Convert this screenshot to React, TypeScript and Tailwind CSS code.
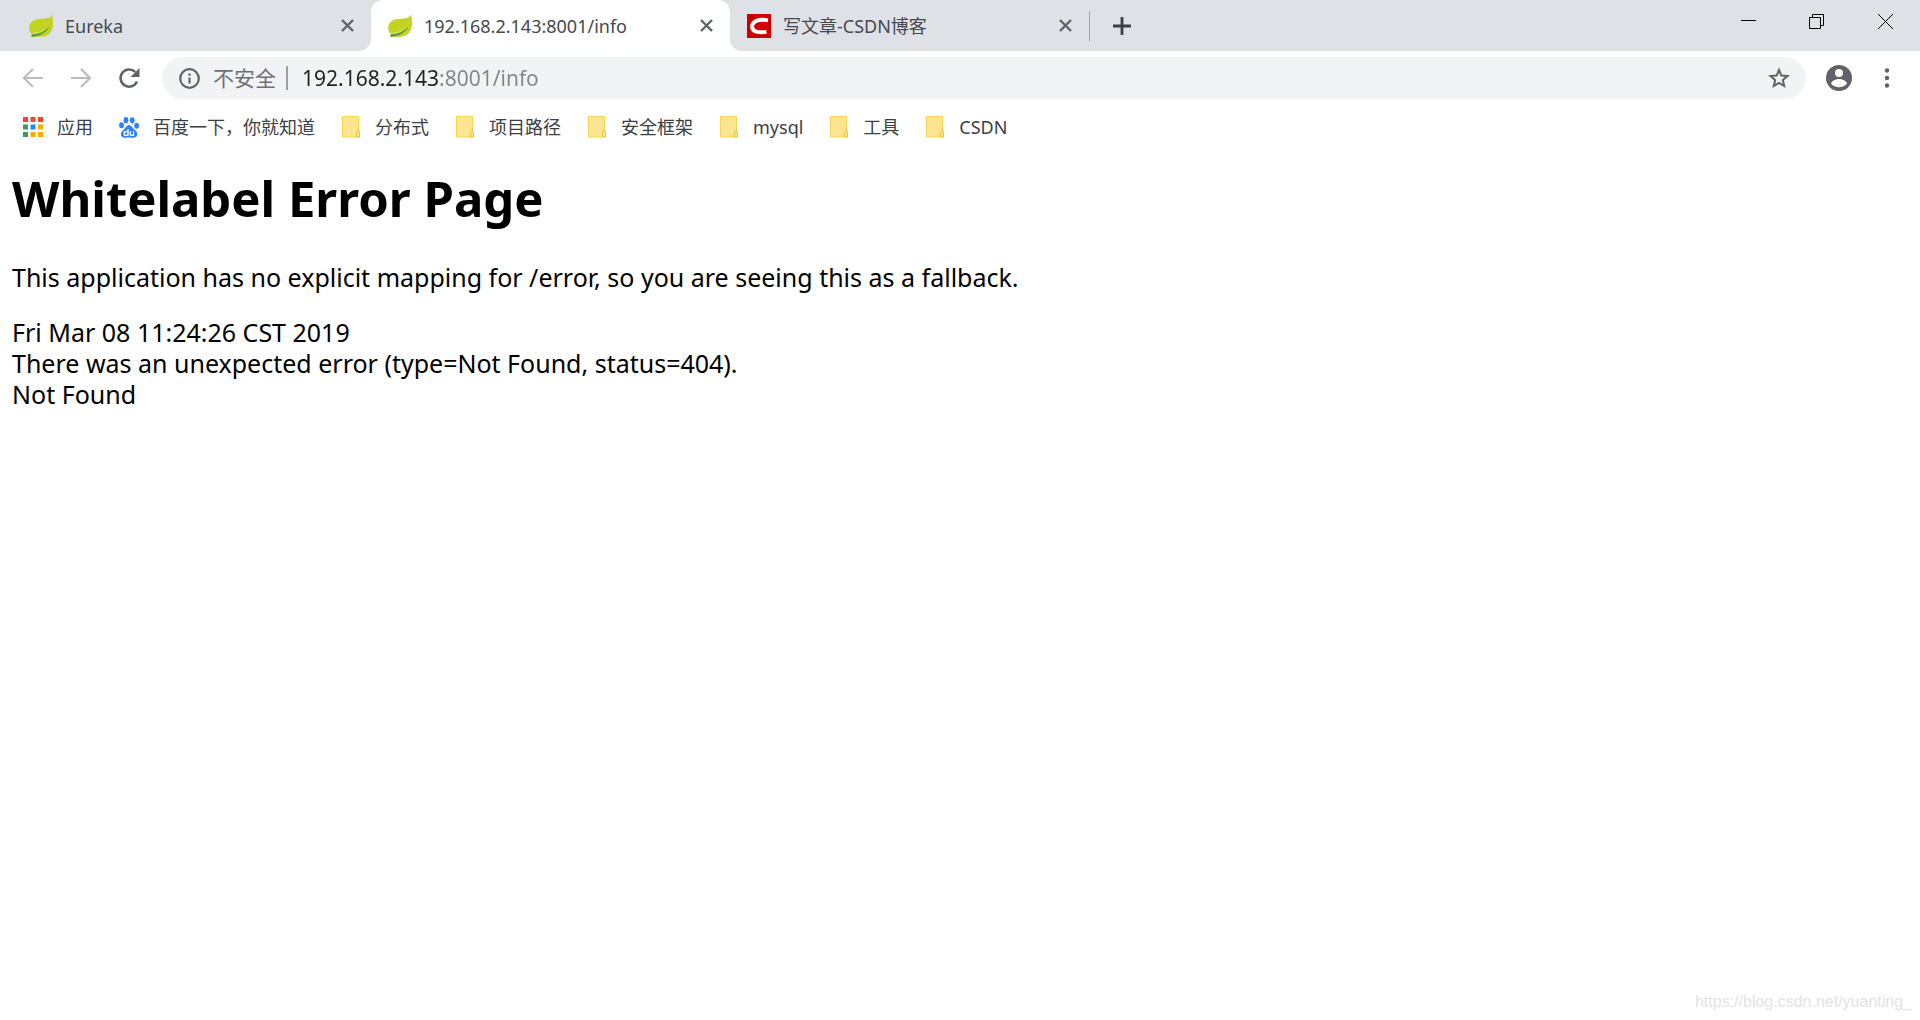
import { useState } from "react";
import type { ReactNode } from "react";

const Leaf = () => (
  <svg viewBox="0 0 24 24" className="size-6 shrink-0" aria-hidden="true">
    <path
      d="M23.200.8C21.500 4 18 4.700 12 4.800 5 5 .3 8.500.2 13.500c0 3 .8 5 2.600 6.800L2.400 23c3.600-.6 6 .2 10.600-.2 7-.6 11-6 11-12.500 0-4-.3-6.500-.8-9.500Z"
      fill="#c3d322"
    />
    <path d="M2.800 20.200c7 .3 12.700-2.200 17.700-8.700C18.500 18 12 22.200 2.400 22.900Z" fill="#5b9a3a" />
    <path d="M2.300 19.200c7.200.2 12.700-2.200 17.400-7.200" stroke="#dbe56a" strokeWidth=".8" fill="none" />
  </svg>
);

const CsdnLogo = () => (
  <svg viewBox="0 0 24 24" className="size-6 shrink-0" aria-hidden="true">
    <rect width="24" height="24" fill="#c00" />
    <path d="M21 6.300C12.500 4.700 5.400 6.500 5.100 12.500c-.1 5.500 6 6.500 14.400 5.400" stroke="#fff" strokeWidth="3.900" fill="none" />
  </svg>
);

const AppsIcon = () => {
  const colors = ["#f44336", "#f44336", "#f44336", "#34a056", "#1e8cff", "#f9ab00", "#34a056", "#f9ab00", "#f9ab00"];
  return (
    <svg viewBox="0 0 20 20" className="size-5 shrink-0" aria-hidden="true">
      {colors.map((color, i) => (
        <rect key={i} x={(i % 3) * 7.5} y={Math.floor(i / 3) * 7.5} width="5" height="5" fill={color} />
      ))}
    </svg>
  );
};

const BaiduIcon = () => (
  <svg viewBox="0 0 20 21" className="h-[21px] w-5 shrink-0" fill="#2d82fb" aria-hidden="true">
    <ellipse cx="2.500" cy="8.200" rx="2.400" ry="3" />
    <ellipse cx="7" cy="3.200" rx="2.400" ry="3.100" />
    <ellipse cx="13.200" cy="3.300" rx="2.400" ry="3.100" />
    <ellipse cx="17.600" cy="8.800" rx="2.400" ry="3" />
    <path d="M10 8c2.300 0 3.200 2.500 4.800 4 1.700 1.500 3.700 2.800 3.400 5.500-.4 3-3 3.300-5.200 3.200-2-.2-4-.2-6 0-2.500.2-4.900-.2-5.200-3.200-.2-2.500 2-4 3.500-5.500S7.700 8 10 8Z" />
    <path d="M9 12.200v6.100H7a1.900 1.900 0 0 1 0-3.800h2M11.200 14.300v2.700q0 1.300 1.300 1.300h2v-4" stroke="#fff" strokeWidth="1.300" fill="none" />
  </svg>
);

const FolderIcon = () => (
  <svg viewBox="0 0 20 22" className="h-[22px] w-5 shrink-0" aria-hidden="true">
    <path d="M1.500.500h16v14.500h1v6h-17Z" fill="#ffe591" stroke="#f8d74f" />
    <path d="M15.500 21v-4.500q0-1.500 1.500-1.500t1.500 1.500V21Z" fill="#ffe591" stroke="#ecc440" />
  </svg>
);

const CloseIcon = () => (
  <svg viewBox="0 0 13 13" className="size-[13px]" aria-hidden="true">
    <path d="M1 1l11 11M12 1L1 12" stroke="#5f6368" strokeWidth="2.400" />
  </svg>
);

const tabs = [
  { title: "Eureka", icon: <Leaf /> },
  { title: "192.168.2.143:8001/info", icon: <Leaf /> },
  { title: "写文章-CSDN博客", icon: <CsdnLogo /> },
];

const bookmarks = [
  { title: "应用", icon: <AppsIcon /> },
  { title: "百度一下，你就知道", icon: <BaiduIcon /> },
  { title: "分布式", icon: <FolderIcon /> },
  { title: "项目路径", icon: <FolderIcon /> },
  { title: "安全框架", icon: <FolderIcon /> },
  { title: "mysql", icon: <FolderIcon /> },
  { title: "工具", icon: <FolderIcon /> },
  { title: "CSDN", icon: <FolderIcon /> },
];

const Tab = ({ title, icon, active }: { title: string; icon: ReactNode; active?: boolean }) => (
  <div className={`flex w-[359px] items-center px-[17px] ${active ? "rounded-t-xl bg-white" : ""}`}>
    <button type="button" className="flex min-w-0 flex-1 items-center gap-3 text-left">
      {icon}
      <span className="truncate text-lg text-[#45494d]">{title}</span>
    </button>
    <button type="button" aria-label={`关闭 ${title}`}>
      <CloseIcon />
    </button>
  </div>
);

const TabStrip = () => (
  <div className="flex h-[51px] bg-white">
    <div className="flex rounded-br-xl bg-[#dee1e6] pl-3">
      <Tab {...tabs[0]} />
    </div>
    <div className="flex bg-[linear-gradient(#dee1e6_50%,#fff_50%)]">
      <Tab {...tabs[1]} active />
    </div>
    <div className="flex flex-1 items-center rounded-bl-xl bg-[#dee1e6]">
      <Tab {...tabs[2]} />
      <div className="h-[30px] w-px bg-[#9fa3a8]" />
      <button type="button" aria-label="打开新的标签页" className="ml-[23px]">
        <svg viewBox="0 0 18 18" className="size-[18px]" aria-hidden="true">
          <path d="M9 0v18M0 9h18" stroke="#3c4043" strokeWidth="2.800" />
        </svg>
      </button>
      <div className="ml-auto flex self-start pt-3.5 pr-[27px]">
        <button type="button" aria-label="最小化" className="mr-[53px]">
          <svg viewBox="0 0 15 15" className="size-[15px]" aria-hidden="true">
            <path d="M0 6.500h15" stroke="#000" />
          </svg>
        </button>
        <button type="button" aria-label="还原" className="mr-[54px]">
          <svg viewBox="0 0 15 15" className="size-[15px]" fill="none" stroke="#000" aria-hidden="true">
            <path d="M.5 3.500h11v11H.5ZM3.500 3.500v-3h11v11h-3" />
          </svg>
        </button>
        <button type="button" aria-label="关闭">
          <svg viewBox="0 0 15 15" className="size-[15px]" stroke="#000" aria-hidden="true">
            <path d="M0 0l15 15M15 0L0 15" />
          </svg>
        </button>
      </div>
    </div>
  </div>
);

const Toolbar = () => {
  const [url, setUrl] = useState("192.168.2.143:8001/info");

  return (
    <div className="flex items-center pt-1.5 pr-[21px] pl-[21px]">
      <button type="button" aria-label="后退" className="mr-6">
        <svg viewBox="0 0 24 24" className="size-6" fill="none" stroke="#babcbe" strokeWidth="2.200" aria-hidden="true">
          <path d="M22 12H3M12 3l-9 9 9 9" />
        </svg>
      </button>
      <button type="button" aria-label="前进" className="mr-6">
        <svg viewBox="0 0 24 24" className="size-6" fill="none" stroke="#babcbe" strokeWidth="2.200" aria-hidden="true">
          <path d="M2 12h19M12 3l9 9-9 9" />
        </svg>
      </button>
      <button type="button" aria-label="重新加载" className="mr-[21px]">
        <svg viewBox="0 0 24 24" className="size-6" aria-hidden="true">
          <path d="M20 15.500A8.600 8.600 0 1 1 18.300 6" fill="none" stroke="#5f6368" strokeWidth="2.500" />
          <path d="M22.500 2v9h-9Z" fill="#5f6368" />
        </svg>
      </button>
      <form className="flex h-[42px] flex-1 items-center rounded-full bg-[#f1f3f4] pr-4 pl-[17px]" onSubmit={(e) => e.preventDefault()}>
        <button type="button" className="flex items-center text-[21px] leading-6 text-[#6d7175]">
          <svg viewBox="0 0 21 21" className="mr-[13px] size-[21px]" aria-hidden="true">
            <circle cx="10.500" cy="10.500" r="9.300" fill="none" stroke="#5f6368" strokeWidth="2.200" />
            <path d="M10.500 9.500v6M10.500 5.500v2.300" stroke="#5f6368" strokeWidth="2.200" />
          </svg>
          不安全
        </button>
        <span className="mr-3.5 ml-2.5 h-6 w-0.5 bg-[#9aa0a6]" />
        {/* dark host, grey port and path */}
        <input
          type="text"
          aria-label="地址"
          value={url}
          onChange={(e) => setUrl(e.target.value)}
          className="h-8 min-w-0 flex-1 bg-[linear-gradient(90deg,#202124_137px,#80868b_137px)] bg-clip-text text-[21px] text-transparent caret-black outline-none"
        />
        <button type="button" aria-label="为此标签页添加书签">
          <svg viewBox="0 0 22 22" className="size-[22px]" aria-hidden="true">
            <path d="M11 2.800l2.300 5.700 6.200.5-4.700 4 1.400 6-5.200-3.200L5.800 19l1.400-6-4.700-4 6.200-.5Z" fill="none" stroke="#5f6368" strokeWidth="2" />
          </svg>
        </button>
      </form>
      <button type="button" aria-label="用户" className="ml-5">
        <svg viewBox="0 0 26 26" className="size-[26px]" aria-hidden="true">
          <circle cx="13" cy="13" r="13" fill="#5f6368" />
          <circle cx="13" cy="8" r="4" fill="#fff" />
          <path d="M5 18.500c1-3 5-4.500 8-4.500s7 1.500 8 4.500c-2 2.600-5 3.800-8 3.800s-6-1.200-8-3.800Z" fill="#fff" />
        </svg>
      </button>
      <button type="button" aria-label="自定义及控制" className="ml-[23px]">
        <svg viewBox="0 0 24 24" className="size-6" fill="#5f6368" aria-hidden="true">
          <circle cx="12" cy="4.500" r="2.200" />
          <circle cx="12" cy="12" r="2.200" />
          <circle cx="12" cy="19.500" r="2.200" />
        </svg>
      </button>
    </div>
  );
};

const BookmarkBar = () => (
  <nav className="flex gap-[26px] pt-[14px] pl-[23px]">
    {bookmarks.map((bookmark) => (
      <a key={bookmark.title} href="#" className="flex items-center gap-3.5 text-lg leading-7 text-[#3c4043]">
        {bookmark.icon}
        {bookmark.title}
      </a>
    ))}
  </nav>
);

const App = () => {
  return (
    <div className="flex min-h-screen flex-col bg-white font-['Noto_Sans','Noto_Sans_CJK_SC',sans-serif]">
      <header>
        <TabStrip />
        <Toolbar />
        <BookmarkBar />
      </header>
      <main className="px-3 pt-[25px] text-[25px] leading-[31px] text-black">
        <h1 className="text-[49px] leading-16 font-bold">Whitelabel Error Page</h1>
        <p className="mt-8">This application has no explicit mapping for /error, so you are seeing this as a fallback.</p>
        <div className="mt-6">Fri Mar 08 11:24:26 CST 2019</div>
        <div>There was an unexpected error (type=Not Found, status=404).</div>
        <div>Not Found</div>
      </main>
      <footer className="mt-auto pr-2 pb-1.5 text-right font-['Liberation_Sans',sans-serif] text-base text-[#e4e4e4]">
        https://blog.csdn.net/yuanting_
      </footer>
    </div>
  );
};

export default App;
